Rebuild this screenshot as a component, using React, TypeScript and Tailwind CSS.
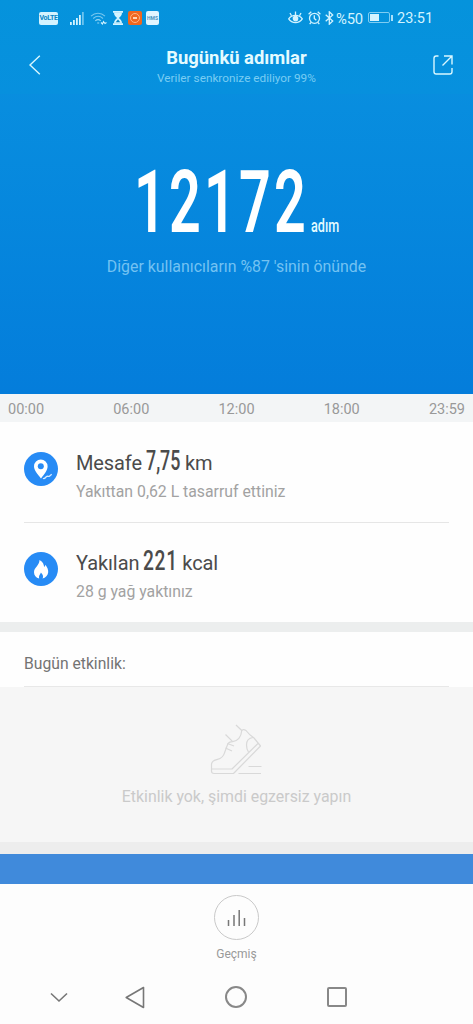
import React from "react";

const hours = ["00:00", "06:00", "12:00", "18:00", "23:59"];

const StatusBar = () => {
  return (
    <div className="h-9 pl-[39px] pr-[39px] flex items-center justify-between text-[#d3f3ff]">
      <div className="flex items-center">
        <div className="w-[19px] h-[13px] rounded-[2px] bg-[#d3f3ff] text-[#0785c4] text-[7px] leading-[13px] font-bold flex justify-center tracking-[-0.3px]">
          VoLTE
        </div>
        <svg className="ml-3 w-[14px] h-[13px]" viewBox="0 0 14 13" fill="currentColor">
          <path d="M0 10h1.8v3H0zM3 8h1.8v5H3zM6 6h1.8v7H6zM9 3h1.8v10H9z" />
          <path d="M12 0h1.8v13H12z" opacity=".5" />
        </svg>
        <svg
          className="ml-[6px] w-[17px] h-[13px]"
          viewBox="0 0 17 13"
          fill="none"
          stroke="currentColor"
          strokeWidth="1.1"
        >
          <path d="M1 4.2C5 .2 11 .2 15 4.2M3.2 6.5c3-2.8 6.800-2.800 9.800 0" opacity=".55" />
          <path d="M5.300 8.800c1.800-1.500 3.700-1.500 5.500 0M7.200 11h2" opacity=".7" />
          <path d="M11 10.500l1.500 1.500 1-2.500 1.500 2 1.500-1" />
        </svg>
        <svg className="ml-[6px] w-[10px] h-[14px]" viewBox="0 0 10 14" fill="currentColor">
          <path d="M0 0h10v1.700H0zM0 12.300h10V14H0z" />
          <path d="M1 1.500h8c0 3-1.500 4-3.200 5.500C7.500 8.500 9 9.500 9 12.500H1C1 9.500 2.500 8.500 4.200 7 2.500 5.500 1 4.500 1 1.500z" />
          <path d="M5 8.500l2.300 2.800H2.700z" fill="#0785c4" />
        </svg>
        <div className="ml-[5px] w-[14px] h-[14px] rounded-[2px] bg-[#ef671f] flex items-center justify-center">
          <div className="w-[10px] h-[10px] rounded-full border border-[#ffb485] flex items-center justify-center">
            <div className="w-1 h-[2px] bg-[#ffd5b8]" />
          </div>
        </div>
        <div className="ml-[4px] w-[13px] h-[14px] rounded-[2px] bg-[#e0f5ff] text-[#4b91bd] text-[5px] leading-[14px] font-bold text-center">
          HMS
        </div>
      </div>
      <div className="flex items-center">
        <svg
          className="w-[15px] h-[13px]"
          viewBox="0 0 15 13"
          fill="none"
          stroke="currentColor"
          strokeWidth="1.300"
        >
          <path d="M.7 7.800C4 3.300 11 3.300 14.300 7.800 11 12.800 4 12.800.7 7.800z" />
          <path d="M7.500 4V.5M3.500 4.800L2 2M11.500 4.800L13 2" />
          <circle cx="7.500" cy="7.600" r="2.200" fill="currentColor" />
        </svg>
        <svg
          className="ml-[5px] w-[13px] h-[14px]"
          viewBox="0 0 13 14"
          fill="none"
          stroke="currentColor"
          strokeWidth="1.300"
        >
          <circle cx="6.500" cy="7.300" r="5" />
          <path d="M6.300 4.300v3.200l2 1.800M.6 3.200L3.300.8M12.400 3.200L9.700.8M3 11.500l-1.300 1.700M10 11.500l1.300 1.700" />
        </svg>
        <svg
          className="ml-1 w-[9px] h-[14px]"
          viewBox="0 0 9 14"
          fill="none"
          stroke="currentColor"
          strokeWidth="1.300"
        >
          <path d="M.7 3.800l7 6.200-3.400 3.200V.8l3.400 3.200-7 6.200" />
        </svg>
        <span className="mt-[2px] ml-[2px] w-[29px] text-[14.800px] leading-none tracking-[-0.2px]">%50</span>
        <div className="ml-[3px] w-[22px] h-[11px] border border-[#7fcdf2] rounded-[2px] p-px">
          <div className="w-[9px] h-full bg-[#d3f3ff]" />
        </div>
        <div className="w-[2px] h-[6px] ml-px bg-[#a9e0fa]" />
        <span className="mt-[2px] ml-[4px] w-[37px] text-[14.500px] leading-none">23:51</span>
      </div>
    </div>
  );
};

const Header = () => {
  return (
    <div className="h-[58px] pl-[29px] pr-5 flex items-center justify-between">
      <svg className="w-[12px] h-[20px]" viewBox="0 0 12 20" fill="none" stroke="#d9f7ff" strokeWidth="1.400">
        <path d="M10.800.8L1 10l9.800 9.200" />
      </svg>
      <div className="-ml-px mt-[3px] flex flex-col items-center">
        <p className="text-[18.400px] leading-[22px] font-bold text-[#e4fbff] whitespace-nowrap">Bugünkü adımlar</p>
        <p className="text-[11.800px] leading-[18px] text-[#79cdf3] whitespace-nowrap">
          Veriler senkronize ediliyor 99%
        </p>
      </div>
      <svg className="w-5 h-5" viewBox="0 0 20 20" fill="none" stroke="#d9f7ff" strokeWidth="1.400">
        <path d="M5.500 1H3.200Q1 1 1 3.200v13.600Q1 19 3.200 19h13.600q2.200 0 2.200-2.200V13M9.500 10.500L19 1M11 1h8v8.500" />
      </svg>
    </div>
  );
};

const Metric = ({
  icon,
  label,
  unit,
  note,
  children,
}: {
  icon: React.ReactNode;
  label: string;
  unit: string;
  note: string;
  children: React.ReactNode;
}) => {
  return (
    <div className="h-[100px] flex">
      <div className="mt-[30px] w-[34px] h-[34px] shrink-0 rounded-full bg-[#278bf5]">{icon}</div>
      <div className="ml-[18px] pt-[23px]">
        <div className="h-8 flex items-baseline text-[20px] leading-8 text-[#4b4b4b]">
          <span className="tracking-[-0.1px]">{label}</span>
          {children}
          <span className="tracking-[-0.1px]">{unit}</span>
        </div>
        <p className="mt-1 text-[15.800px] leading-[21px] text-[#a2a2a2]">{note}</p>
      </div>
    </div>
  );
};

const Metrics = () => {
  return (
    <div className="h-[200px] px-6 bg-[#fefefe]">
      <Metric
        label="Mesafe"
        unit="km"
        note="Yakıttan 0,62 L tasarruf ettiniz"
        icon={
          <svg viewBox="0 0 34 34">
            <path
              d="M17 26.500C13.500 22 10 18.500 10 14.300a6.800 6.800 0 0 1 13.600 0C23.600 18.500 20.500 22 17 26.500z"
              fill="#fff"
            />
            <circle cx="16.800" cy="14.200" r="3" fill="#278bf5" />
            <path d="M19 26.300c1.500 1 2.500-.8 3.500-1.700s2 .3 3.200-.7l2-1.600" fill="none" stroke="#d7eaff" strokeWidth="1.300" />
          </svg>
        }
      >
        <span className="ml-1 mr-[5px] w-[34px] text-[27px]">
          <span className="inline-block origin-left scale-x-[0.66] font-medium">7,75</span>
        </span>
      </Metric>
      <div className="h-px -mb-px bg-[#e6e6e6]" />
      <Metric
        label="Yakılan"
        unit="kcal"
        note="28 g yağ yaktınız"
        icon={
          <svg viewBox="0 0 34 34">
            <path
              d="M15.500 8c3.500 2 4.500 4.500 4.600 7 .8-.5 1.200-1.200 1.300-2.200 2 2.500 3 5 2.800 7.500-.3 3.200-2.600 5.700-5.700 6.200 1-1.500.8-3.700-1.600-6-.5 2-2.500 2.700-1.700 6-3.200-.7-5.200-3.200-5.200-6.300 0-4.700 5.500-6.700 5.500-12.200z"
              fill="#fff"
            />
          </svg>
        }
      >
        <span className="ml-1 mr-[5px] w-[34px] text-[27px]">
          <span className="inline-block origin-left scale-x-[0.71] tracking-[1px] font-medium">221</span>
        </span>
      </Metric>
    </div>
  );
};

const Activity = () => {
  return (
    <div>
      <div className="h-[55px] px-6 bg-[#fefefe]">
        <p className="h-full pt-[21px] text-[15.700px] leading-[22px] text-[#737373] border-b border-[#e8e8e8]">
          Bugün etkinlik:
        </p>
      </div>
      <div className="h-[155px] pt-[37px] bg-[#f6f6f6] flex flex-col items-center">
        <svg
          className="w-[54px] h-[54px]"
          viewBox="0 0 54 54"
          fill="none"
          stroke="#d9d9d9"
          strokeWidth="1.200"
          strokeLinejoin="round"
        >
          <path d="M1.500 45v-4.500c0-3 2.500-4.500 6-5.200 4-.8 6-3 7.200-7l3-8c.8-2 2.500-2.600 5-2.700 5-.2 8.500-4.500 9-10.800Q33 4.500 36 6.500q3 4 8 7.500L50.500 22 23.500 49.500H4q-2.500 0-2.500-2.500V45h20.500l26-25.500" />
          <path d="M22.700 17.600L15.500 10.500M32 6.800L26 1M15.500 24l6.500 3M17.500 19.500l6.500 2.500M43 13.500c-5 .5-6.500 4-6.500 7.500 0 3.500 1 5.500 2 7" />
          <path d="M38.500 42.500h13M28.500 49.500h22.500" />
        </svg>
        <p className="mt-2 text-[15.900px] leading-[22px] text-[#cacaca]">Etkinlik yok, şimdi egzersiz yapın</p>
      </div>
    </div>
  );
};

const BottomBar = () => {
  return (
    <div className="h-[140px] bg-[#fdfdfd]">
      <div className="pt-[11px] flex flex-col items-center">
        <div className="w-[45px] h-[45px] rounded-full border border-[#c9c9c9] flex items-center justify-center">
          <svg className="w-[19px] h-[18px]" viewBox="0 0 19 18" fill="none" stroke="#777" strokeWidth="1.500">
            <path d="M1.500 17v-6M7 17V6M12.200 17V1M17.500 17V9" />
          </svg>
        </div>
        <p className="mt-1 text-[12px] leading-5 text-[#999]">Geçmiş</p>
      </div>
      {/* system navigation */}
      <div className="pl-[50px] mt-[21px] h-[24px] flex items-center text-[#777]">
        <svg className="w-[18px] h-[11px]" viewBox="0 0 18 11" fill="none" stroke="currentColor" strokeWidth="1.600">
          <path d="M1 1.500l8 7.500 8-7.500" />
        </svg>
        <svg
          className="ml-[57px] w-[21px] h-[23px]"
          viewBox="0 0 21 23"
          fill="none"
          stroke="currentColor"
          strokeWidth="1.600"
          strokeLinejoin="round"
        >
          <path d="M18.500 1.500v20L1.200 11.500z" />
        </svg>
        <div className="ml-[79px] w-[22px] h-[22px] rounded-full border-2 border-[#888]" />
        <div className="ml-[80px] w-[20px] h-[20px] rounded-[2px] border-2 border-[#888]" />
      </div>
    </div>
  );
};

export default function App() {
  return (
    <div className="w-[473px] h-[1024px] overflow-hidden bg-[#eceeee] font-['Roboto','Noto_Sans',sans-serif]">
      <div className="h-[394px] bg-gradient-to-b from-[#0b93e0] to-[#047ddb]">
        <div className="bg-gradient-to-b from-[#0593dc] to-[#0790de]">
          <StatusBar />
          <Header />
        </div>
        <div className="pt-[58px] flex justify-center items-baseline text-white">
          <div className="ml-[2px] w-[173px] text-[87px] leading-[100px]">
            <span className="inline-block origin-left scale-x-[0.64] tracking-[5px] font-semibold">12172</span>
          </div>
          <div className="ml-[4px] w-[30px] text-[18px]">
            <span className="inline-block origin-left scale-x-[0.7] font-medium text-[#e4fbff]">adım</span>
          </div>
        </div>
        <p className="mt-[3px] text-center text-[15.900px] leading-6 text-[#73c2f2]">
          Diğer kullanıcıların %87 'sinin önünde
        </p>
      </div>
      <div className="h-7 px-2 pt-[3px] flex items-center justify-between bg-[#f3f5f6] text-[14.500px] text-[#999]">
        {hours.map((hour) => (
          <span key={hour}>{hour}</span>
        ))}
      </div>
      <Metrics />
      <div className="h-[10px] bg-[#eceeee]" />
      <Activity />
      <div className="h-3 bg-[#ededed]" />
      <div className="h-[30px] bg-[#408adb]" />
      <BottomBar />
    </div>
  );
}
